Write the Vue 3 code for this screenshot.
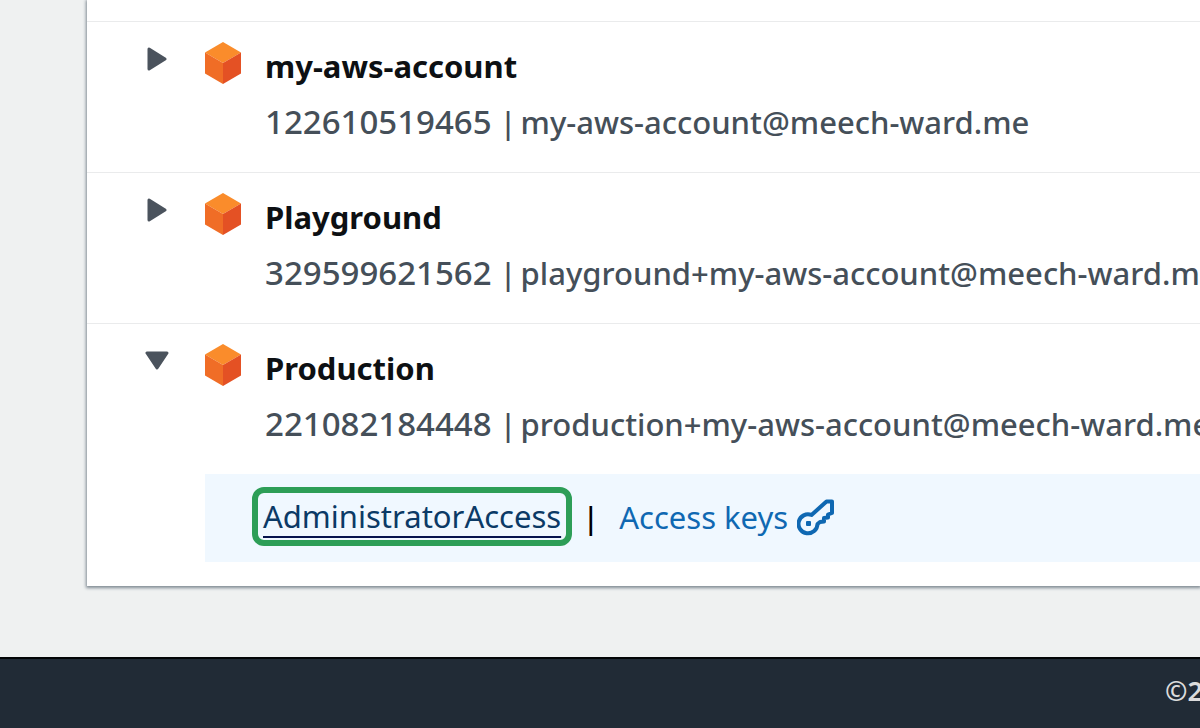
<script setup>
import { ref } from 'vue'

const accounts = ref([
  { name: 'my-aws-account', id: '122610519465', email: 'my-aws-account@meech-ward.me', open: false },
  { name: 'Playground', id: '329599621562', email: 'playground+my-aws-account@meech-ward.me', open: false },
  { name: 'Production', id: '221082184448', email: 'production+my-aws-account@meech-ward.me', open: true }
])
</script>

<template>
  <div class="page">
    <main class="panel">
      <section v-for="account in accounts" :key="account.id" class="account">
        <div class="summary">
          <button
            class="toggle"
            type="button"
            :aria-expanded="account.open"
            :aria-label="account.name"
            @click="account.open = !account.open"
          >
            <svg v-if="account.open" width="24" height="24" viewBox="0 0 24 24">
              <path d="M2 4H22L12 19Z" fill="#4b535d" stroke="#4b535d" stroke-width="3" stroke-linejoin="round" />
            </svg>
            <svg v-else width="24" height="24" viewBox="0 0 24 24">
              <path d="M4 2V22L20 12Z" fill="#4b535d" stroke="#4b535d" stroke-width="3" stroke-linejoin="round" />
            </svg>
          </button>
          <svg class="cube" width="38" height="42" viewBox="0 0 38 42" aria-hidden="true">
            <path d="M19 0L37 10.5L19 21L1 10.5Z" fill="#fa8c2b" />
            <path d="M1 10.5L19 21V42L1 31.5Z" fill="#f06d26" />
            <path d="M37 10.5L19 21V42L37 31.5Z" fill="#e45124" />
          </svg>
          <div class="details">
            <h2 class="name">{{ account.name }}</h2>
            <p class="meta">
              <span class="id">{{ account.id }}</span>
              <span class="bar">|</span>
              <span>{{ account.email }}</span>
            </p>
          </div>
        </div>
        <div v-if="account.open" class="actions">
          <a class="role" href="#">AdministratorAccess</a>
          <span class="divider">|</span>
          <a class="keys" href="#">
            <span>Access keys</span>
            <svg class="key" width="38" height="38" viewBox="0 0 38 38" aria-hidden="true">
              <path
                d="M14.500 17L29.500 3.500H35V15L31 16.500V19.500L27 20V23.500L23 24L20.500 26A9.500 9.500 0 1 1 14.500 17Z"
                fill="none"
                stroke="#0f68b2"
                stroke-width="4"
                stroke-linejoin="round"
              />
              <rect x="9" y="23" width="5" height="5" rx="1" fill="#0f68b2" />
            </svg>
          </a>
        </div>
      </section>
    </main>
    <footer class="footer"><span class="copyright">©2</span></footer>
  </div>
</template>

<style>
body {
  margin: 0;
}
</style>

<style scoped>
.page {
  display: flex;
  flex-direction: column;
  min-height: 100vh;
  overflow: hidden;
  background: #eff1f1;
  color: #0d1013;
  font-family: "Noto Sans", "Open Sans", sans-serif;
  font-size: 31px;
  font-weight: 500;
}

.panel {
  margin: 0 0 71px 87px;
  padding: 21px 0 24px;
  background: #fff;
  box-shadow: 0 1px 3px 1px #7f8a93;
}

.account {
  border-top: 1px solid #eaebec;
}

.summary {
  display: flex;
  align-items: flex-start;
  padding: 16px 0 22px 58px;
}

.toggle {
  display: flex;
  margin: 9px 35px 0 0;
  padding: 0;
  border: 0;
  background: none;
  cursor: pointer;
}

.cube {
  flex: none;
  margin: 4px 23px 0 0;
}

.details {
  min-width: 0;
  white-space: nowrap;
}

.name,
.meta {
  margin: 0;
  line-height: 56px;
}

.name {
  font-size: 31px;
  font-weight: 700;
}

.meta {
  display: flex;
  color: #454f59;
}

.id {
  font-size: 33px;
}

.bar {
  margin: 0 4px 0 8px;
}

.actions {
  display: flex;
  align-items: center;
  box-sizing: border-box;
  height: 88px;
  margin-left: 118px;
  padding: 0 0 3px 47px;
  background: #f0f8ff;
  font-weight: 400;
  white-space: nowrap;
}

.role {
  padding: 0 5px;
  border: 6px solid #2d9e57;
  border-radius: 12px;
  color: #0b3a66;
  line-height: 47px;
  text-decoration: underline #06134d 2px;
  text-underline-offset: 8px;
}

.divider {
  margin: 0 20px 0 10px;
  color: #000;
  font-weight: 500;
}

.keys {
  display: flex;
  align-items: center;
  gap: 9px;
  color: #0f68b2;
  text-decoration: none;
}

.footer {
  display: flex;
  flex: 1;
  justify-content: flex-end;
  border-top: 2px solid #030507;
  background: #212b36;
}

.copyright {
  margin: 14px -3px 0 0;
  color: #dcdcdc;
  font-size: 27px;
  font-weight: 600;
  line-height: 36px;
}
</style>
